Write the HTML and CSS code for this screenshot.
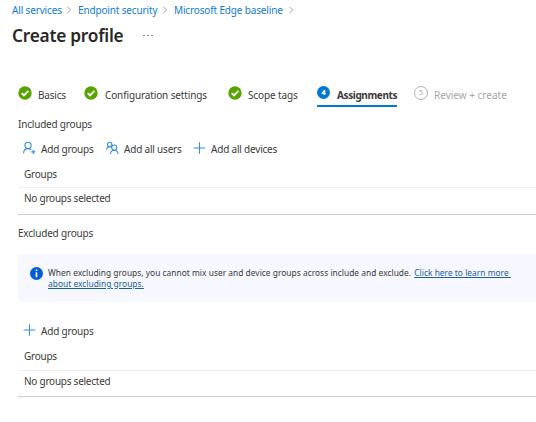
FILE: index.html
```html
<!DOCTYPE html>
<html lang="en">
<head>
<meta charset="utf-8">
<title>Create profile</title>
<link rel="stylesheet" href="styles.css">
</head>
<body>
<svg class="defs" aria-hidden="true">
  <symbol id="chevron" viewBox="0 0 6 8"><path d="M1.2 .8 4.8 4 1.2 7.2"/></symbol>
  <symbol id="check" viewBox="0 0 14 14"><circle cx="7" cy="7" r="6.7" fill="#57a300"/><path d="M3.7 7.1 6 9.4 10.4 4.9" fill="none" stroke="#fff" stroke-width="1.8"/></symbol>
  <symbol id="plus" viewBox="0 0 12 12"><path d="M6 .2V11.8M.2 6H11.8"/></symbol>
</svg>
<nav class="breadcrumb">
  <a class="bc1">All services</a><svg class="chev"><use href="#chevron"/></svg>
  <a class="bc2">Endpoint security</a><svg class="chev"><use href="#chevron"/></svg>
  <a class="bc3">Microsoft Edge baseline</a><svg class="chev"><use href="#chevron"/></svg>
</nav>
<header class="title"><h1>Create profile</h1><span class="more"><i></i><i></i><i></i></span></header>
<main>
  <div class="steps">
    <div class="step s1"><svg class="badge"><use href="#check"/></svg><span>Basics</span></div>
    <div class="step s2"><svg class="badge"><use href="#check"/></svg><span>Configuration settings</span></div>
    <div class="step s3"><svg class="badge"><use href="#check"/></svg><span>Scope tags</span></div>
    <div class="step s4 active"><b class="badge num">4</b><span>Assignments</span></div>
    <div class="step s5 pending"><b class="badge num">5</b><span>Review + create</span></div>
  </div>
  <h2 class="included">Included groups</h2>
  <div class="toolbar">
    <div class="cmd c1"><svg class="icon" viewBox="0 0 13 12"><circle cx="5" cy="3.4" r="3.1"/><path d="M.5 11.2C.7 8.3 2.5 6.6 5 6.6c1.3 0 2.3.4 3.1 1.2M10.3 7.9v4M8.3 9.9h4"/></svg><span>Add groups</span></div>
    <div class="cmd c2"><svg class="icon" viewBox="0 0 13 12"><circle cx="3.7" cy="2.4" r="2.2"/><circle cx="8.3" cy="5.6" r="2.6"/><path d="M.6 7.6C.7 5.7 1.9 4.6 3.7 4.6c.8 0 1.4.2 1.9.6M4.5 12C4.7 9.6 6.1 8.2 8.3 8.2s3.6 1.4 3.8 3.8"/></svg><span>Add all users</span></div>
    <div class="cmd c3"><svg class="icon"><use href="#plus"/></svg><span>Add all devices</span></div>
  </div>
  <div class="table">
    <div class="th"><span>Groups</span></div>
    <div class="td"><span>No groups selected</span></div>
  </div>
  <h2 class="excluded">Excluded groups</h2>
  <div class="info">
    <svg class="info-icon" viewBox="0 0 12 12"><circle cx="6" cy="6" r="6" fill="#015cda"/><path d="M6 4.8V9.5M6 2.2V3.7" stroke="#fff" stroke-width="1.5"/></svg>
    <p><span class="l1">When excluding groups, you cannot mix user and device groups across include and exclude.</span> <a class="l2">Click here to learn more&nbsp;</a><br><a class="l3">about excluding groups.</a></p>
  </div>
  <div class="toolbar second">
    <div class="cmd c1"><svg class="icon"><use href="#plus"/></svg><span>Add groups</span></div>
  </div>
  <div class="table lower">
    <div class="th"><span>Groups</span></div>
    <div class="td"><span>No groups selected</span></div>
  </div>
</main>
</body>
</html>
```
FILE: styles.css
```css
* { box-sizing: border-box; }
body { margin: 0; width: 536px; height: 422px; overflow: hidden; background: #fff; color: #3b3a39; font: 10px/14px "Noto Sans", sans-serif; white-space: nowrap; }
h1, h2, p { margin: 0; font-weight: 400; }
svg { fill: none; flex: none; }
.defs { display: none; }
.breadcrumb { display: flex; align-items: center; height: 20px; padding-left: 12px; color: #0f7bd4; letter-spacing: -.15px; }
.chev { width: 6px; height: 8px; stroke: #a6a6a6; stroke-width: 1; }
.bc1 { width: 54px; }
.bc2 { width: 84px; margin-left: 6px; }
.bc3 { width: 114px; margin-left: 6px; }
.title { display: flex; align-items: center; height: 31px; padding-left: 12px; color: #292827; }
.title h1 { width: 131px; font-size: 17.3px; line-height: 24px; font-weight: 600; letter-spacing: -.25px; }
.more { display: flex; gap: 2px; }
.more i { width: 2px; height: 1px; background: #8a8886; }
main { padding-left: 18px; }
.steps { display: flex; margin-top: 29px; height: 27px; }
.step { display: flex; align-items: center; gap: 6px; height: 27px; padding-bottom: 1px; flex: none; }
.step span { padding-top: 3px; }
.s1 { width: 66px; letter-spacing: -.2px; }
.s2 { width: 143px; gap: 7px; letter-spacing: -.13px; }
.s3 { width: 91px; gap: 6px; padding-left: 1px; letter-spacing: -.13px; }
.s4 { width: 80px; margin-right: 16px; }
.badge { width: 14px; height: 14px; flex: none; margin-top: -1px; }
.num { border-radius: 50%; font-size: 7px; line-height: 14px; text-align: center; letter-spacing: 0; }
.active { border-bottom: 2px solid #0078d4; font-weight: 700; padding-bottom: 0; gap: 7px; letter-spacing: -.38px; margin-left: -1px; }
.active span { padding-top: 4px; }
.s5 { margin-left: 1px; }
.active .num { background: #0078d4; color: #fff; width: 13px; height: 13px; line-height: 13px; }
.pending { color: #a6a6a6; }
.pending .num { border: 1px solid #b3b0ad; font-weight: 400; line-height: 12px; }
h2 { font-size: 10px; line-height: 14px; letter-spacing: -.2px; }
.included { margin-top: 10px; }
.toolbar { display: flex; align-items: center; height: 18px; margin-top: 8px; padding-left: 5px; letter-spacing: -.2px; }
.toolbar span { padding-top: 1px; }
.cmd { display: flex; align-items: center; gap: 5px; flex: none; }
.c1 { width: 83px; }
.c2 { width: 87px; }
.icon { width: 13px; height: 12px; stroke: #3490dd; stroke-width: 1.1; overflow: visible; }
.table { height: 57px; margin-top: 1px; border-bottom: 1px solid #cecece; letter-spacing: -.25px; }
.th, .td { display: flex; align-items: center; padding-left: 6px; }
.th { height: 30px; padding-top: 2px; border-bottom: 1px solid #efefef; }
.td { height: 20px; }
.excluded { margin-top: 11px; }
.info { display: flex; gap: 5px; height: 48px; margin-top: 14px; padding: 13px 0 0 12px; background: #f6f7ff; }
.info-icon { width: 13px; height: 13px; }
.info p { font-size: 8.4px; line-height: 11px; letter-spacing: .02px; }
.info a { color: #1b5f96; text-decoration: underline; }
.l2 { margin-left: 1px; }
.second { margin-top: 19px; }
.lower { height: 56px; margin-top: 2px; }
.lower .th { padding-top: 1px; }
.lower .td { height: 19px; }
```
